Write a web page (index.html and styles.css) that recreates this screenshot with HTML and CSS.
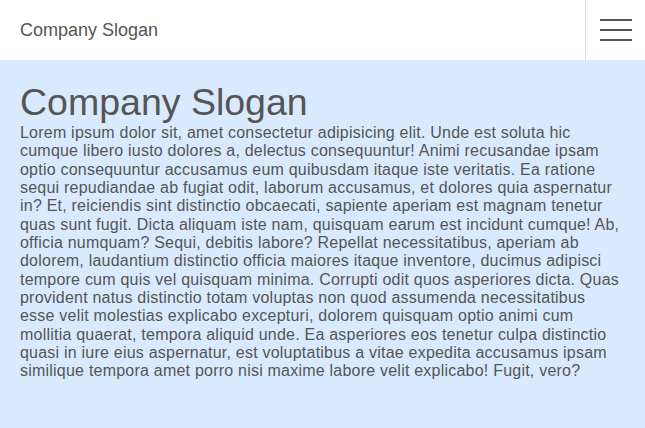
FILE: index.html
```html
<!DOCTYPE html>
<html>
<head>
<meta charset="utf-8">
<link rel="stylesheet" href="styles.css">
</head>
<body>
<header class="topbar">
  <div class="brand">Company Slogan</div>
  <button class="menu-btn" aria-label="Menu">
    <span class="bar"></span>
    <span class="bar"></span>
    <span class="bar"></span>
  </button>
</header>
<main class="hero">
  <h1 class="hero-title">Company Slogan</h1>
  <p class="hero-text">Lorem ipsum dolor sit, amet consectetur adipisicing elit. Unde est soluta hic cumque libero iusto dolores a, delectus consequuntur! Animi recusandae ipsam optio consequuntur accusamus eum quibusdam itaque iste veritatis. Ea ratione sequi repudiandae ab fugiat odit, laborum accusamus, et dolores quia aspernatur in? Et, reiciendis sint distinctio obcaecati, sapiente aperiam est magnam tenetur quas sunt fugit. Dicta aliquam iste nam, quisquam earum est incidunt cumque! Ab, officia numquam? Sequi, debitis labore? Repellat necessitatibus, aperiam ab dolorem, laudantium distinctio officia maiores itaque inventore, ducimus adipisci tempore cum quis vel quisquam minima. Corrupti odit quos asperiores dicta. Quas provident natus distinctio totam voluptas non quod assumenda necessitatibus esse velit molestias explicabo excepturi, dolorem quisquam optio animi cum mollitia quaerat, tempora aliquid unde. Ea asperiores eos tenetur culpa distinctio quasi in iure eius aspernatur, est voluptatibus a vitae expedita accusamus ipsam similique tempora amet porro nisi maxime labore velit explicabo! Fugit, vero?</p>
</main>
</body>
</html>
```
FILE: styles.css
```css
* { box-sizing: border-box; }
html, body { margin: 0; padding: 0; }
body {
  font-family: "Liberation Sans", Arial, sans-serif;
  color: #555;
  background: #d9eaff;
  height: 428px;
  overflow: hidden;
}
.topbar {
  display: flex;
  align-items: stretch;
  height: 60px;
  background: #fff;
}
.brand {
  flex: 1;
  display: flex;
  align-items: center;
  padding-left: 20px;
  font-size: 18px;
  color: #555;
}
.menu-btn {
  width: 60px;
  border: 0;
  border-left: 1px solid #ddd;
  background: #fff;
  padding: 0 13px 0 14px;
  display: flex;
  flex-direction: column;
  justify-content: center;
  gap: 8px;
  cursor: pointer;
}
.bar {
  display: block;
  width: 32px;
  height: 2px;
  background: #555;
}
.hero {
  padding: 20px 23px 20px 20px;
}
.hero-title {
  margin: 0;
  font-size: 37.5px;
  font-weight: normal;
  line-height: 44px;
}
.hero-text {
  margin: 0;
  font-size: 16px;
  letter-spacing: 0.22px;
  line-height: 18.35px;
}
```
